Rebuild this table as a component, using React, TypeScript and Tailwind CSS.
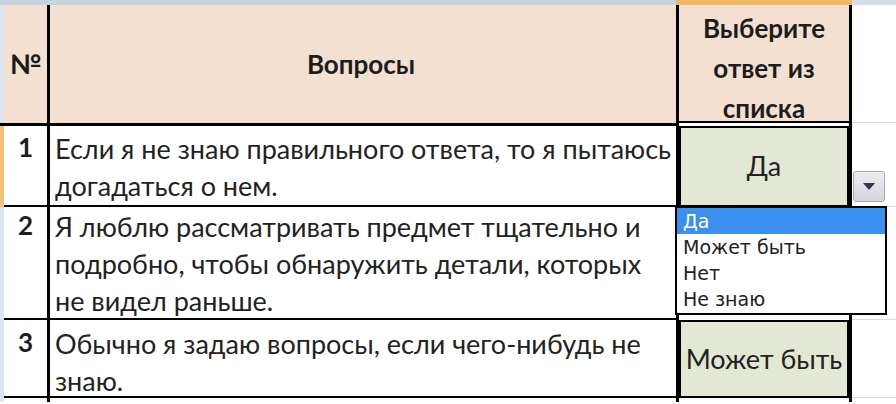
const bodyFont = { fontFamily: 'Lato, "Noto Sans", sans-serif' };

interface Row {
  num: string;
  lines: string[];
  answer: string | null;
  height: string;
  pad: string;
}

const rows: Row[] = [
  {
    num: '1',
    lines: ['Если я не знаю правильного ответа, то я пытаюсь', 'догадаться о нем.'],
    answer: 'Да',
    height: 'h-[81px]',
    pad: 'pt-[4px]',
  },
  {
    num: '2',
    lines: [
      'Я люблю рассматривать предмет тщательно и',
      'подробно, чтобы обнаружить детали, которых',
      'не видел раньше.',
    ],
    answer: null,
    height: 'h-[113px]',
    pad: 'pt-[1px]',
  },
  {
    num: '3',
    lines: ['Обычно я задаю вопросы, если чего-нибудь не', 'знаю.'],
    answer: 'Может быть',
    height: 'h-[78px]',
    pad: 'pt-[5px]',
  },
];

const options = ['Да', 'Может быть', 'Нет', 'Не знаю'];

function AnswerDropdown(): React.JSX.Element {
  return (
    <>
      <div className="absolute left-[853px] top-[171px] flex h-[31px] w-[32px] items-center justify-center rounded-[3px] border border-[#a9a9b4] bg-gradient-to-b from-[#ececf0] to-[#d4d5de]">
        <svg width="12" height="7" viewBox="0 0 12 7">
          <path d="M0 0h12L6 7z" fill="#33334d" />
        </svg>
      </div>
      <div
        className="absolute left-[675px] top-[206px] w-[212px] border-2 border-black bg-white pb-[1px] text-[19px] leading-[26px] text-[#222]"
        style={{ fontFamily: '"DejaVu Sans", sans-serif' }}
      >
        {options.map((option, index) => (
          <div
            className={index === 0 ? 'bg-[#3b8ff0] px-[6px] text-white' : 'px-[6px]'}
            key={option}
          >
            {option}
          </div>
        ))}
      </div>
    </>
  );
}

export default function App(): React.JSX.Element {
  return (
    <div className="relative h-[404px] w-[896px] overflow-hidden bg-white text-[#1c1c1c]" style={bodyFont}>
      <div className="flex h-[5px]">
        <div className="w-[676px] bg-[#c8d3e0]" />
        <div className="w-[176px] bg-[#f0b860]" />
        <div className="flex-1 bg-[#d6dde6]" />
      </div>

      <div className="flex h-[118px]">
        <div className="w-[4px] bg-[#dbe4ef]" />
        <div className="flex w-[43px] items-center justify-center bg-[#f3e0d1] text-[27px] font-bold">
          №
        </div>
        <div className="w-[3px] bg-black" />
        <div className="flex w-[626px] items-center justify-center bg-[#f3e0d1] pr-[4px] text-[26px] font-bold">
          Вопросы
        </div>
        <div className="flex w-[176px] flex-col items-center border-x-[3px] border-b-[2px] border-black bg-[#f3e0d1] pt-[3px] text-center text-[26px] font-bold leading-[40px]">
          <span>Выберите</span>
          <span>ответ из</span>
          <span>списка</span>
        </div>
        <div className="flex-1 border-b border-[#dcdcdc]" />
      </div>

      <div className="flex h-[3px]">
        <div className="w-[676px] bg-black" />
        <div className="w-[176px] border-x-[3px] border-black" />
        <div className="flex-1" />
      </div>

      {rows.map((row, index) => (
        <div className="flex" key={row.num}>
          <div className={`flex w-[4px] flex-col ${index === 0 ? 'bg-[#f2c27a]' : 'bg-[#dbe4ef]'}`} />
          <div className={`flex ${row.height} w-[672px] border-b-[2px] border-black`}>
            <div className={`w-[43px] ${row.pad} text-center text-[26px] font-bold leading-[34px]`}>{row.num}</div>
            <div className="w-[3px] bg-black" />
            <div className={`flex-1 pl-[5px] ${row.pad} text-[27px] leading-[37px] text-[#222]`}>
              {row.lines.map((line) => (
                <div className="whitespace-nowrap" key={line}>
                  {line}
                </div>
              ))}
            </div>
          </div>
          <div className="w-[176px] border-x-[3px] border-black">
            {row.answer ? (
              <div className="flex h-full items-center justify-center border-2 border-black bg-[#e3e8d4] text-[27px] text-[#222]">
                {row.answer}
              </div>
            ) : (
              <div className="h-full border-t border-[#cfcfcf]" />
            )}
          </div>
          <div className="flex-1 border-b border-[#dcdcdc]" />
        </div>
      ))}

      <div className="flex h-[4px]">
        <div className="w-[4px] bg-[#dbe4ef]" />
        <div className="w-[43px]" />
        <div className="w-[3px] bg-black" />
        <div className="w-[626px]" />
        <div className="w-[176px] border-x-[3px] border-black" />
      </div>

      <AnswerDropdown />
    </div>
  );
}
